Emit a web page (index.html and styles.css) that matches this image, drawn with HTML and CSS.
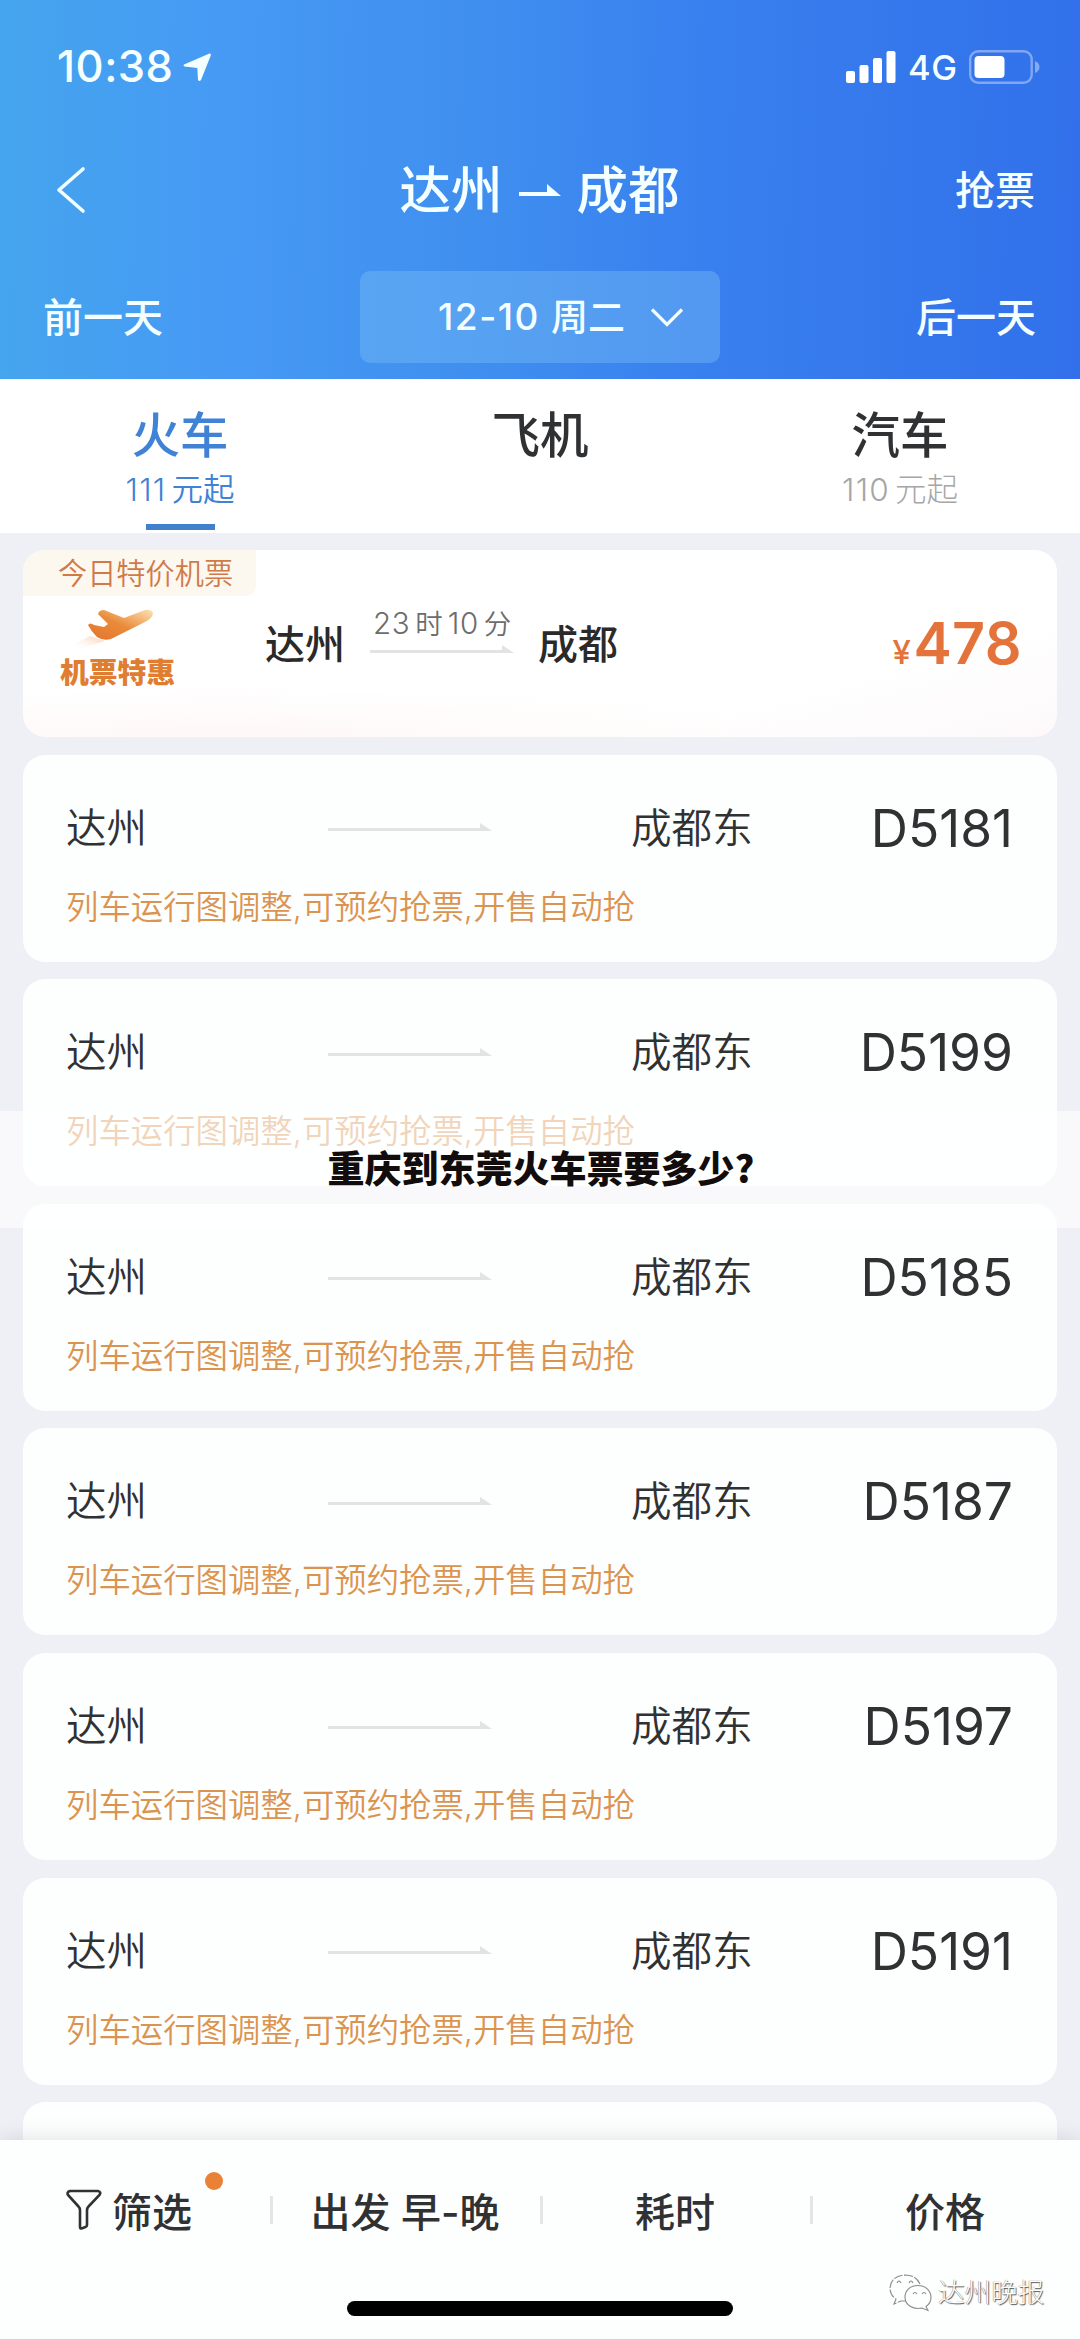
FILE: index.html
```html
<!DOCTYPE html>
<html lang="zh-CN">
<head>
<meta charset="utf-8">
<title>达州 - 成都</title>
<link rel="stylesheet" href="styles.css">
</head>
<body>
<svg class="defs" width="0" height="0" aria-hidden="true">
  <symbol id="route" viewBox="0 0 164 8"><path d="M0 5h152V0l12 8H0z" fill="#e1e3e5"/></symbol>
</svg>
<div class="app">
  <header class="header">
    <div class="status">
      <span class="clock">10:38</span>
      <svg class="locate" width="30" height="30" viewBox="0 0 30 30"><path d="M27.500 1.500L2 12.500q-1.500 1.200.5 2l12.800 1.500.7 12q1.200 2 3 0l9.800-24.500q.4-2.400-1.300-2z" fill="#f4ffff"/></svg>
      <svg class="signal" width="50" height="32" viewBox="0 0 50 32" fill="#fff"><rect y="20" width="9" height="12" rx="2"/><rect x="13.500" y="14" width="9" height="18" rx="2"/><rect x="27" y="7" width="9" height="25" rx="2"/><rect x="40.500" width="9" height="32" rx="2"/></svg>
      <span class="network">4G</span>
      <svg class="battery" width="71" height="34" viewBox="0 0 71 34"><rect x="1.200" y="1.200" width="61.500" height="31.500" rx="8" fill="none" stroke="#fff" stroke-opacity=".38" stroke-width="2.400"/><rect x="5.500" y="6" width="30" height="22" rx="4" fill="#fff"/><path d="M66 11q4.500 2 4.500 6t-4.500 6z" fill="#fff" fill-opacity=".4"/></svg>
    </div>
    <div class="titlebar">
      <svg class="back" width="30" height="48" viewBox="0 0 30 48"><path d="M27 3L3 24 27 45" fill="none" stroke="#f4ffff" stroke-width="3.600" stroke-linecap="round" stroke-linejoin="round"/></svg>
      <h1 class="title"><span>达州</span><svg width="42" height="12" viewBox="0 0 42 12"><path d="M0 8h28V0l14 12H0z" fill="#f4ffff"/></svg><span>成都</span></h1>
      <span class="grab">抢票</span>
    </div>
    <div class="days">
      <span class="prev">前一天</span>
      <div class="date"><span class="date-num">12-10</span><span class="weekday">周二</span><svg width="34" height="20" viewBox="0 0 34 20"><path d="M2 2.500l15 15 15-15" fill="none" stroke="#f4ffff" stroke-width="3.200"/></svg></div>
      <span class="next">后一天</span>
    </div>
  </header>

  <nav class="tabs">
    <div class="tab active"><b>火车</b><span><i>111</i>元起</span></div>
    <div class="tab"><b>飞机</b></div>
    <div class="tab"><b>汽车</b><span><i>110</i>元起</span></div>
  </nav>

  <main class="list">
    <section class="promo">
      <div class="badge">今日特价机票</div>
      <div class="promo-row">
        <div class="deal">
          <svg width="88" height="42" viewBox="0 0 88 42">
            <defs>
              <linearGradient id="wing" x1="0" y1="1" x2="1" y2="0"><stop offset="0" stop-color="#e3732c"/><stop offset=".5" stop-color="#ea8b3a"/><stop offset="1" stop-color="#fde3b4"/></linearGradient>
              <linearGradient id="trail" x1="0" y1="1" x2="1" y2="0"><stop offset="0" stop-color="#fff" stop-opacity="0"/><stop offset="1" stop-color="#f4a36c"/></linearGradient>
            </defs>
            <path d="M3 37l18-9 9 3 6 2L10 41z" fill="url(#trail)" opacity=".55"/>
            <path d="M19 17q2-3 6 0l10 2 4-3-10-10q1-4 6-4l20 8 21-8q6-1 8 3 0 5-8 9L42 31q-8 2-14-2-6-6-9-12z" fill="url(#wing)"/>
          </svg>
          <strong>机票特惠</strong>
        </div>
        <span class="p-from">达州</span>
        <div class="time"><span><i>23</i>时<i class="min">10</i>分</span><svg width="144" height="8" viewBox="20 0 144 8"><use href="#route" width="164" height="8"/></svg></div>
        <span class="p-to">成都</span>
        <div class="price"><small>¥</small>478</div>
      </div>
    </section>
    <article class="train"><div class="leg"><span>达州</span><svg width="164" height="8"><use href="#route"/></svg><span>成都东</span><em>D5181</em></div><p>列车运行图调整,可预约抢票,开售自动抢</p></article>
    <article class="train"><div class="leg"><span>达州</span><svg width="164" height="8"><use href="#route"/></svg><span>成都东</span><em>D5199</em></div><p>列车运行图调整,可预约抢票,开售自动抢</p></article>
    <article class="train"><div class="leg"><span>达州</span><svg width="164" height="8"><use href="#route"/></svg><span>成都东</span><em>D5185</em></div><p>列车运行图调整,可预约抢票,开售自动抢</p></article>
    <article class="train"><div class="leg"><span>达州</span><svg width="164" height="8"><use href="#route"/></svg><span>成都东</span><em>D5187</em></div><p>列车运行图调整,可预约抢票,开售自动抢</p></article>
    <article class="train"><div class="leg"><span>达州</span><svg width="164" height="8"><use href="#route"/></svg><span>成都东</span><em>D5197</em></div><p>列车运行图调整,可预约抢票,开售自动抢</p></article>
    <article class="train"><div class="leg"><span>达州</span><svg width="164" height="8"><use href="#route"/></svg><span>成都东</span><em>D5191</em></div><p>列车运行图调整,可预约抢票,开售自动抢</p></article>
    <article class="train"></article>
  </main>

  <footer class="footer">
    <div class="filters">
      <div class="filter first">
        <svg width="36" height="42" viewBox="0 0 36 42"><path d="M4 2h28q3.500 1 1.500 4L22.500 17.500q-1.500 1.500-1.500 4V36q0 1.500-1.500 2l-4 1.500q-1.500.3-1.500-1.500V21.500q0-2.500-1.500-4L2 6q-1.500-3 2-4z" fill="none" stroke="#303133" stroke-width="2.600"/></svg>
        <span class="label">筛选<i class="dot"></i></span>
      </div>
      <div class="filter">出发 早-晚</div>
      <div class="filter">耗时</div>
      <div class="filter">价格</div>
    </div>
    <div class="home"></div>
  </footer>

  <div class="caption">重庆到东莞火车票要多少?</div>
  <div class="account">
    <svg width="43" height="38" viewBox="0 0 43 38" fill="none" stroke="#8b8b8b" stroke-width="1.100">
      <path d="M31 10Q27 1 16 1 2 2 1 14q0 7 6 11l-2 5 7-3h5" stroke-dasharray="9 1.500"/>
      <path d="M29 11.500c8 0 13 5.500 13 12 0 4-2 7-5 9l2 4-6-2.500c-9 2-17-3-17-11 0-6.500 5-11.500 13-11.500z"/>
      <path d="M8 9q2-4 4 0M20 9q2-4 4 0M24 20q2-3 4 0M33 20q2-3 4 0"/>
    </svg>
    <span>达州晚报</span>
  </div>
</div>
</body>
</html>
```
FILE: styles.css
```css
* { box-sizing: border-box; }
body { margin: 0; background: #eff0f6; }
i, em { font-style: normal; }
svg { display: block; flex: none; }
.defs { position: absolute; }

.app {
  position: relative;
  width: 1080px;
  height: 2339px;
  display: flex;
  flex-direction: column;
  overflow: hidden;
  background: #eff0f6;
  color: #303133;
  font-family: Inter, "Noto Sans CJK SC", sans-serif;
  white-space: nowrap;
}

/* header */
.header {
  height: 379px;
  flex: none;
  padding-top: 32px;
  color: #f4ffff;
  background: linear-gradient(91deg, #45a5ee 0%, #4699f4 22%, #3f8eef 46%, #3980ef 65%, #3170ea 100%);
}
.status { height: 70px; display: flex; align-items: center; padding: 0 41px 0 57px; }
.clock { font-size: 43.500px; font-weight: 550; letter-spacing: .5px; padding-bottom: 2px; }
.locate { margin-left: 9px; }
.signal { margin-left: auto; }
.network { margin-left: 12px; font-size: 34.500px; font-weight: 450; width: 48px; letter-spacing: .5px; }
.battery { margin-left: 13px; margin-right: -1px; }
.titlebar { height: 100px; margin-top: 38px; padding: 0 45px 0 56px; display: grid; grid-template-columns: 180px 1fr 190px; align-items: center; }
.title { margin: 0; display: flex; align-items: center; justify-content: center; gap: 16px; font-size: 51.500px; line-height: 60px; font-weight: 500; padding-right: 2px; }
.title span { padding-bottom: 0; }
.grab { font-size: 40px; font-weight: 500; text-align: right; padding-bottom: 4px; }
.days { height: 92px; margin-top: 31px; padding: 0 44px 0 43px; display: grid; grid-template-columns: 317px 360px 1fr; align-items: center; font-size: 40px; font-weight: 500; }
.prev, .next { padding-bottom: 4px; }
.next { text-align: right; }
.date { height: 92px; display: flex; align-items: center; padding-left: 78px; border-radius: 10px; background: rgba(122, 190, 245, .4); font-size: 37px; }
.date-num { font-size: 37px; font-weight: 550; width: 113px; letter-spacing: 1.500px; padding-bottom: 1px; }
.weekday { padding-bottom: 4px; }
.date svg { margin-left: 25px; }

/* transport tabs */
.tabs { height: 154px; flex: none; display: grid; grid-template-columns: repeat(3, 1fr); background: #fff; }
.tab { display: flex; flex-direction: column; align-items: center; line-height: 1; color: #303133; }
.tab b { margin-top: 32px; font-size: 48.500px; line-height: 50px; font-weight: 500; }
.tab span { margin-top: 9px; font-size: 31.500px; line-height: 40px; color: #a6a6a6; font-weight: 300; }
.tab i { margin-right: 5px; font-weight: 350; letter-spacing: 1.200px; }
.tab.active span { font-weight: 350; }
.tab.active, .tab.active span { color: #3f82d6; }
.tab.active::after { content: ""; width: 69px; height: 6px; margin-top: 14px; background: #4280cd; }

/* result list */
.list { flex: 1; min-height: 0; overflow: hidden; padding: 17px 23px 0; }
.promo {
  height: 187px;
  border-radius: 22px;
  overflow: hidden;
  background: radial-gradient(ellipse 600px 50px at 20% 100%, #fef8f6, rgba(255, 250, 248, 0)), linear-gradient(165deg, #fff 75%, #fdf9fa);
}
.badge { width: 233px; height: 46px; padding-left: 35px; background: #fdf8ef; border-bottom-right-radius: 10px; color: #cf7b49; font-size: 29.200px; line-height: 48px; font-weight: 350; }
.promo-row { display: flex; height: 94px; align-items: center; }
.deal { width: 242px; padding-left: 37px; padding-top: 17px; color: #df7d31; }
.deal svg { margin-left: 9px; }
.deal strong { display: block; font-size: 28.800px; font-weight: 900; line-height: 45px; }
.p-from, .p-to { font-size: 40px; font-weight: 500; color: #2a2a2a; padding-bottom: 2px; }
.p-from { width: 105px; }
.time { width: 168px; color: #6c6c6c; font-size: 27.500px; line-height: 34px; font-weight: 350; padding-bottom: 24px; }
.time span { display: block; padding-left: 3px; margin-top: -3px; }
.time i { font-size: 29.500px; font-weight: 350; margin-right: 5px; letter-spacing: .6px; }
.time .min { margin-left: 5px; }
.time svg { margin-top: 4px; }
.price { margin-left: auto; margin-right: 35px; color: #e3733a; font-size: 57.500px; font-weight: 600; letter-spacing: .4px; }
.price small { font-size: 33px; font-weight: 500; margin-right: 2px; }
.train { height: 207px; margin-top: 17.600px; padding: 41px 44px 0 43px; border-radius: 22px; background: #fdfefe; }
.leg { display: grid; grid-template-columns: 262px 303px 130px 1fr; align-items: center; height: 60px; font-size: 40.600px; font-weight: 350; color: #303133; }
.leg span { padding-bottom: 6px; }
.leg svg { margin-top: -2px; }
.leg em { font-size: 51.500px; font-weight: 400; text-align: right; letter-spacing: 0; padding-bottom: 1px; }
.train p { margin: 31px 0 0; font-size: 32.400px; line-height: 42px; font-weight: 350; color: #db9450; }

/* sort bar */
.footer { position: relative; height: 199px; flex: none; background: #fdfefe; box-shadow: 0 0 22px rgba(0, 0, 0, .13); }
.filters { height: 139px; display: grid; grid-template-columns: repeat(4, 270px); align-items: center; font-size: 40px; font-weight: 500; }
.filter { display: flex; align-items: center; justify-content: center; }
.filter + .filter::before { content: ""; width: 3px; height: 28px; margin-right: auto; background: #e4e6e6; }
.filter + .filter::after { content: ""; width: 3px; margin-left: auto; }
.first { justify-content: flex-start; padding-left: 66px; gap: 10px; }
.label { position: relative; }
.dot { position: absolute; left: 93px; top: -9px; width: 18px; height: 18px; border-radius: 50%; background: #e98236; }
.home { width: 386px; height: 15px; margin: 22px auto 0; border-radius: 8px; background: #000; }

/* overlays */
.caption { position: absolute; left: 0; right: 0; top: 1111px; height: 117px; padding-left: 2px; line-height: 112px; text-align: center; background: rgba(255, 255, 255, .6); color: #120d0c; font-family: "Noto Sans CJK SC", sans-serif; font-size: 37px; font-weight: 900; }
.account { position: absolute; left: 889px; top: 2271px; display: flex; align-items: center; gap: 6px; font-size: 26.600px; font-weight: 300; color: #fdfefe; text-shadow: 1px 1px 1px #555, -.500px -.500px .500px #999; }
.account span { padding-bottom: 5px; }
```
